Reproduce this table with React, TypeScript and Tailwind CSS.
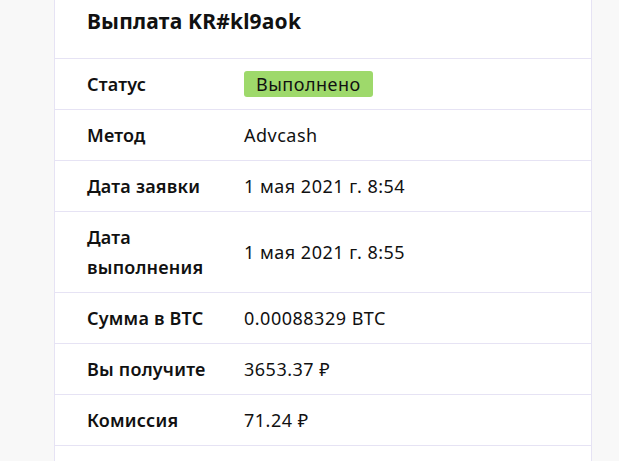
const rows: { label: string; value: string }[] = [
  { label: 'Метод', value: 'Advcash' },
  { label: 'Дата заявки', value: '1 мая 2021 г. 8:54' },
  { label: 'Дата выполнения', value: '1 мая 2021 г. 8:55' },
  { label: 'Сумма в BTC', value: '0.00088329 BTC' },
  { label: 'Вы получите', value: '3653.37 ₽' },
  { label: 'Комиссия', value: '71.24 ₽' },
];

const Row = ({ label, children }: { label: string; children: React.ReactNode }) => (
  <div className="grid grid-cols-[189px_1fr] items-center border-b border-[#e6e3f4] py-[10px] leading-[30px]">
    <div className="pl-[32px] pr-[20px] font-semibold tracking-[0.2px]">{label}</div>
    <div className="tracking-[0.5px]">{children}</div>
  </div>
);

export default function App() {
  return (
    <div className="h-[461px] overflow-hidden bg-[#f8f8f8] font-['Noto_Sans',sans-serif] text-[18px] text-[#111]">
      <div className="ml-[54px] w-[538px] bg-white border-x border-[#e6e3f4] min-h-full">
        <div className="h-[59px] border-b border-[#e6e3f4] pl-[32px] pt-[6px]">
          <h1 className="text-[21px] font-bold leading-[30px] tracking-[0.2px]">Выплата KR#kl9aok</h1>
        </div>
        <Row label="Статус">
          <span className="inline-block rounded-[3px] bg-[#9ed96b] px-[12px] leading-[26px]">Выполнено</span>
        </Row>
        {rows.map((r) => (
          <Row key={r.label} label={r.label}>
            {r.value}
          </Row>
        ))}
        <div className="h-[60px]" />
      </div>
    </div>
  );
}
